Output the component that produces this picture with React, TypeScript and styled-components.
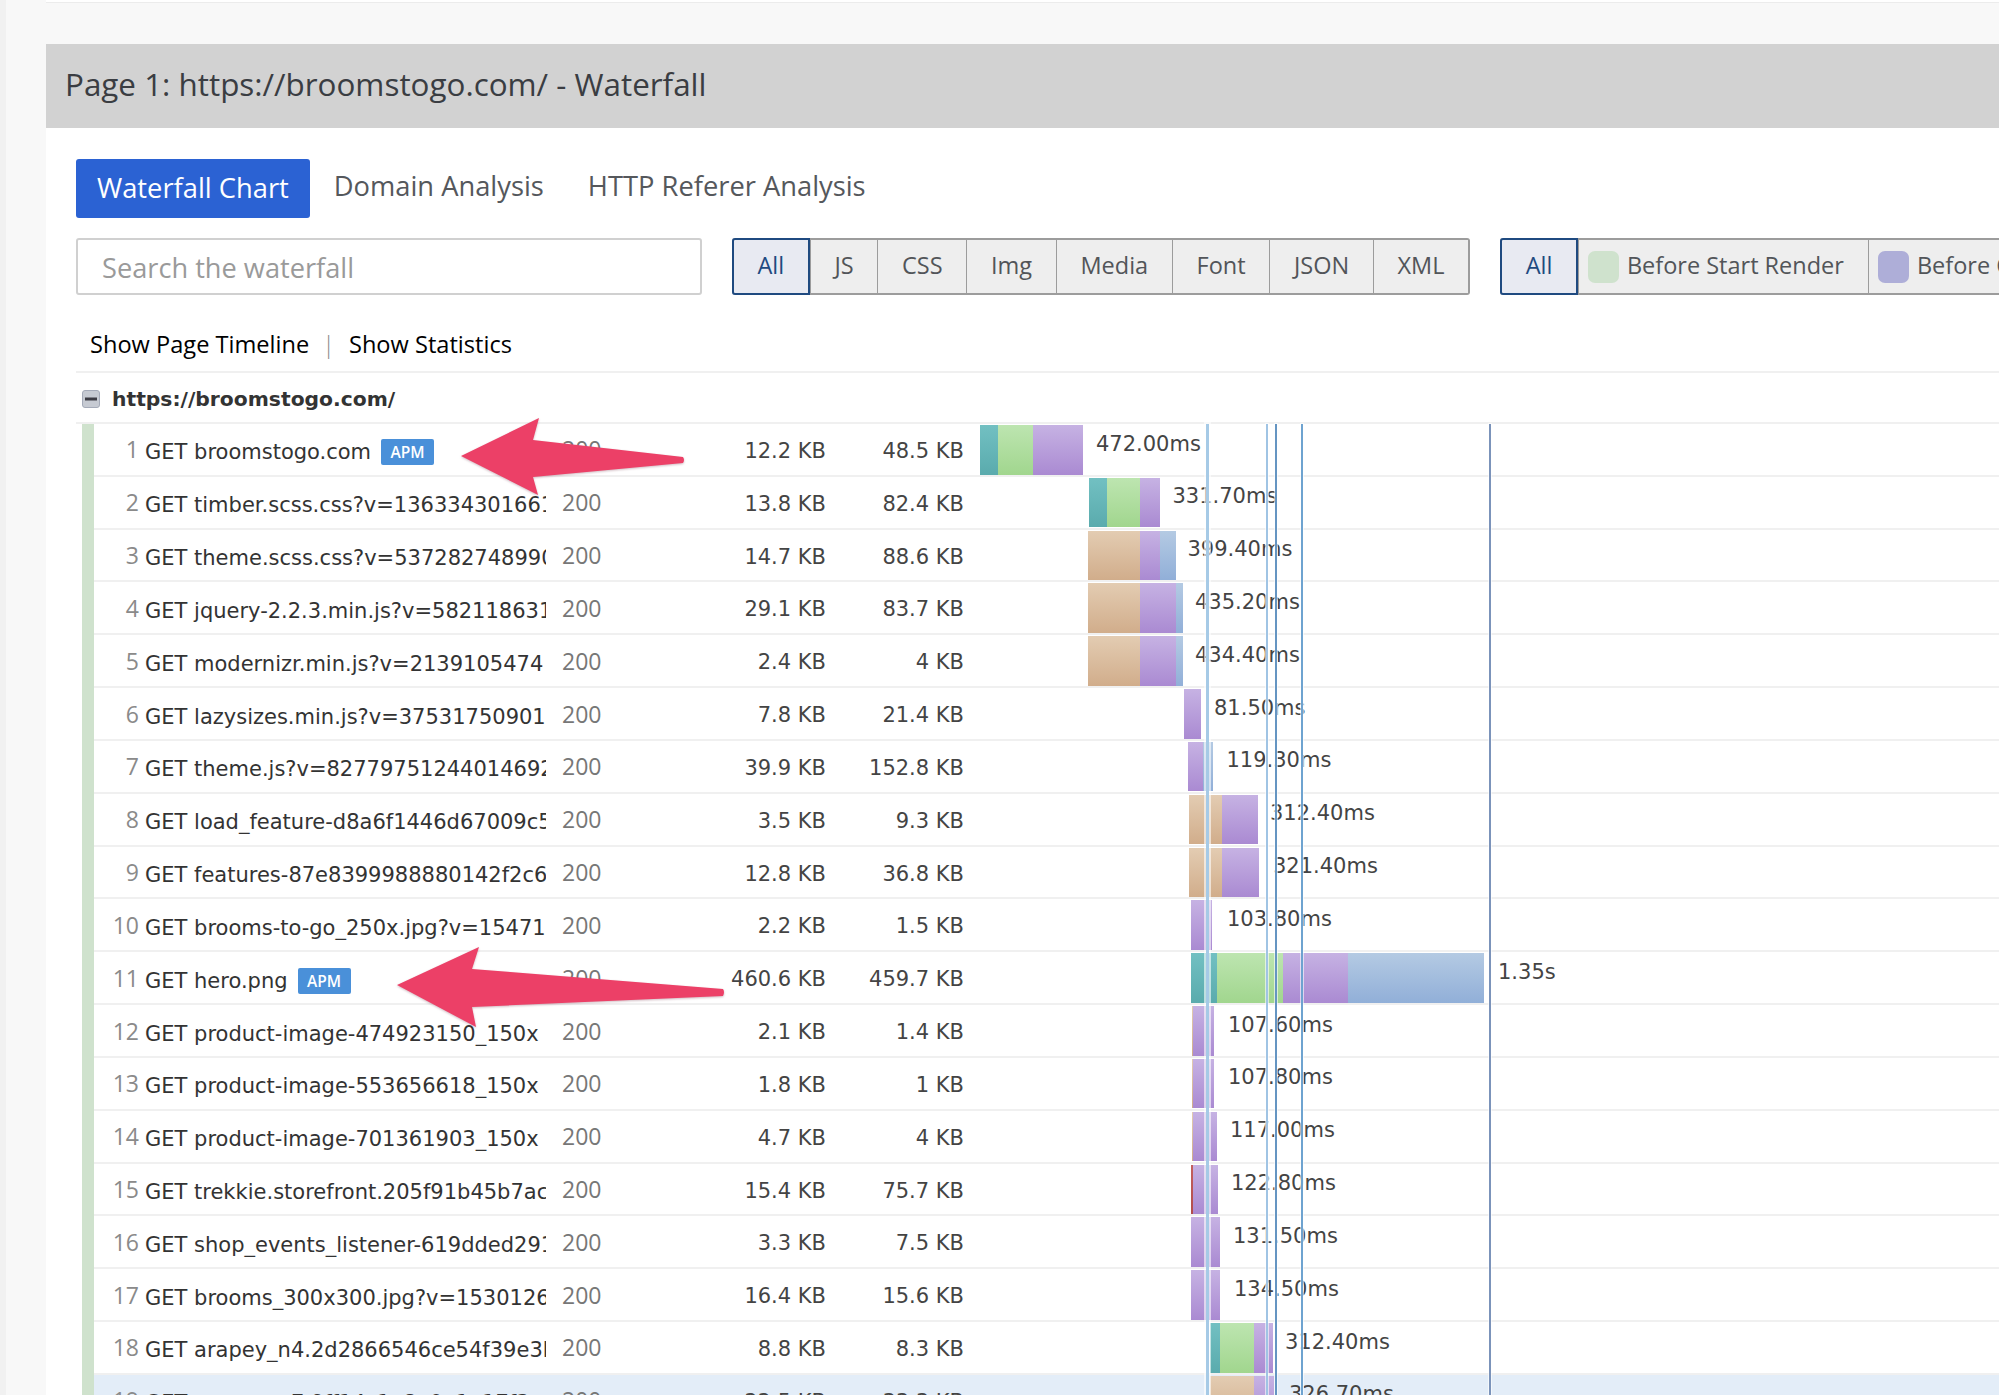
import styled, { createGlobalStyle } from 'styled-components';

const GlobalStyle = createGlobalStyle`
	html, body {
		margin: 0;
		height: 1395px;
		overflow: hidden;
		background: #f8f8f8;
		font-family: 'Open Sans', sans-serif;
	}
	* { box-sizing: border-box; }
`;

const Page = styled.div`
	width: 1999px;
	height: 1395px;
	overflow: hidden;
	border-left: 6px solid #f1f1f1;
	padding-left: 40px;
`;

const TopCard = styled.div`
	height: 3px;
	background: #fff;
	border-bottom: 1px solid #ececec;
`;

const Panel = styled.section`
	margin-top: 41px;
	background: #fff;
	height: 1351px;
	overflow: hidden;
`;

const PanelHeader = styled.h2`
	margin: 0;
	height: 84px;
	padding: 0 0 5px 19px;
	display: flex;
	align-items: center;
	background: #d2d2d2;
	color: #3a3d42;
	font-size: 31.4px;
	font-weight: 400;
`;

const Body = styled.div`
	padding: 31px 0 0 30px;
`;

const Tabs = styled.nav`
	display: flex;
	gap: 2px;
	height: 59px;
`;

const Tab = styled.a<{ $active?: boolean }>`
	display: flex;
	align-items: center;
	padding: ${(p) => (p.$active ? '0 21px 2px 21px' : '0 21px 6px 21px')};
	margin-right: ${(p) => (p.$active ? '1px' : '0')};
	border-radius: 3px;
	font-size: 27.3px;
	color: ${(p) => (p.$active ? '#fff' : '#55585c')};
	background: ${(p) => (p.$active ? '#2b62d3' : 'transparent')};
`;

const Toolbar = styled.div`
	display: flex;
	gap: 30px;
	margin-top: 20px;
	height: 57px;
`;

const Search = styled.input`
	flex: 0 0 626px;
	height: 57px;
	padding: 2px 24px 0;
	border: 2px solid #d0d0d0;
	border-radius: 3px;
	font-family: inherit;
	font-size: 27.2px;
	color: #444;
	outline: none;
	&::placeholder {
		color: #9a9a9a;
	}
`;

const FilterGroup = styled.div`
	display: flex;
	flex: none;
	border-top: 2px solid #9c9c9c;
	border-bottom: 2px solid #9c9c9c;
	border-right: 1px solid #9c9c9c;
	border-radius: 3px;
	background: #eee;
`;

const Filter = styled.button<{ $active?: boolean }>`
	display: flex;
	align-items: center;
	gap: 8px;
	margin: ${(p) => (p.$active ? '-2px 0' : '0')};
	padding: 0 ${(p) => (p.$active ? '25.5px' : '23.7px')} 3px;
	border: none;
	border-right: 1px solid #9c9c9c;
	border-radius: ${(p) => (p.$active ? '3px 0 0 3px' : '0')};
	background: ${(p) => (p.$active ? '#e8eaf2' : '#eee')};
	box-shadow: ${(p) => (p.$active ? 'inset 0 0 0 2px #1f4a80' : 'none')};
	color: ${(p) => (p.$active ? '#1f4a80' : '#525559')};
	font-family: inherit;
	font-size: 23.5px;
	white-space: nowrap;
`;

const LegendFilter = styled(Filter)`
	padding: 0 24px 3px 9px;
`;

const Swatch = styled.span<{ $color: string }>`
	width: 31px;
	height: 32px;
	margin-top: 3px;
	border-radius: 7px;
	background: ${(p) => p.$color};
`;

const Links = styled.div`
	display: flex;
	align-items: center;
	height: 78px;
	padding: 22px 0 0 14px;
	border-bottom: 2px solid #f0f0f0;
	font-size: 23.6px;
	font-weight: 500;
	color: #000;
`;

const Divider = styled.span`
	margin: 0 14px 0 13px;
	color: #888;
	font-weight: 300;
`;

const HostRow = styled.div`
	display: flex;
	align-items: center;
	gap: 12px;
	height: 51px;
	padding: 2px 0 0 6px;
	border-bottom: 2px solid #f0f0f0;
	font-family: 'DejaVu Sans', sans-serif;
	font-size: 20.3px;
	font-weight: 700;
	color: #333;
`;

const Rows = styled.div`
	position: relative;
	margin-left: 6px;
	border-left: 12px solid #cfe2cd;
`;

const Row = styled.div<{ $highlight?: boolean }>`
	display: grid;
	grid-template-columns: 43px 409px 94px 186px 138px 1fr;
	align-items: center;
	height: 52.83px;
	border-bottom: 2px solid #f0f0f0;
	background: ${(p) => (p.$highlight ? '#e3edf8' : 'transparent')};
	font-family: 'DejaVu Sans', sans-serif;
	font-size: 21px;
`;

const Index = styled.span`
	margin-right: -2px;
	text-align: right;
	font-family: 'Open Sans', sans-serif;
	font-size: 23px;
	color: #8a8a8a;
`;

const Url = styled.div`
	display: flex;
	align-items: center;
	gap: 10px;
	overflow: hidden;
	padding: 6px 0 0 8px;
	white-space: nowrap;
	color: #333;
`;

const Badge = styled.span`
	flex: none;
	width: 53px;
	height: 26px;
	border-radius: 2px;
	background: #4a90d9;
	color: #fff;
	font-family: 'Open Sans', sans-serif;
	font-size: 15.5px;
	font-weight: 600;
	line-height: 26px;
	text-align: center;
`;

const Status = styled.span`
	padding: 0 0 0 16px;
	font-family: 'Open Sans', sans-serif;
	font-size: 23px;
	color: #777;
`;

const Size = styled.span`
	padding-top: 3px;
	text-align: right;
	color: #444;
`;

const Lane = styled.div`
	display: flex;
	align-self: stretch;
	padding-top: 1px;
	height: 50.5px;
`;

const SEGMENTS = {
	teal: ['#72c0c2', '#5aabad'],
	green: ['#bde5b0', '#a1d68e'],
	purple: ['#c6b2e3', '#aa8ad2'],
	tan: ['#e3ccb2', '#d1ad8b'],
	blue: ['#b4cae3', '#91afd8'],
	red: ['#c4605f', '#b24c4c'],
};

type SegmentKind = keyof typeof SEGMENTS;

const Segment = styled.span<{ $kind: SegmentKind }>`
	flex: none;
	height: 100%;
	background: linear-gradient(${(p) => SEGMENTS[p.$kind][0]}, ${(p) => SEGMENTS[p.$kind][1]});
`;

const Duration = styled.span`
	flex: none;
	margin-top: 6.5px;
	line-height: 24px;
	color: #444;
`;

const Marker = styled.i<{ $width: number; $color: string }>`
	position: absolute;
	top: 0;
	bottom: 0;
	width: ${(p) => p.$width}px;
	background: ${(p) => p.$color};
	box-shadow: 0 0 0 ${(p) => (p.$width > 2 ? 2 : 1)}px rgba(255, 255, 255, 0.6);
`;

const ArrowSvg = styled.svg`
	position: absolute;
	overflow: visible;
	filter: drop-shadow(0 1px 1px rgba(120, 60, 80, 0.35));
`;

const CollapseIcon = () => (
	<svg width='18' height='18' viewBox='0 0 18 18'>
		<rect x='0.5' y='0.5' width='17' height='17' rx='2.5' fill='#c6cad2' stroke='#a4aab8' />
		<rect x='3' y='7.5' width='12' height='3' fill='#3c3c44' />
	</svg>
);

type Seg = [SegmentKind, number];

interface Req {
	url: string;
	apm?: boolean;
	size: string;
	total: string;
	start: number;
	segs: Seg[];
	time: string;
	timeX: number;
}

const REQUESTS: Req[] = [
	{ url: 'broomstogo.com', apm: true, size: '12.2 KB', total: '48.5 KB', start: 980, segs: [['teal', 17.5], ['green', 35], ['purple', 50.5]], time: '472.00ms', timeX: 1096 },
	{ url: 'timber.scss.css?v=1363343016613', size: '13.8 KB', total: '82.4 KB', start: 1088.6, segs: [['teal', 18.4], ['green', 33], ['purple', 20]], time: '331.70ms', timeX: 1172.5 },
	{ url: 'theme.scss.css?v=5372827489901', size: '14.7 KB', total: '88.6 KB', start: 1088, segs: [['tan', 52], ['purple', 20], ['blue', 16]], time: '399.40ms', timeX: 1187.5 },
	{ url: 'jquery-2.2.3.min.js?v=5821186312', size: '29.1 KB', total: '83.7 KB', start: 1088, segs: [['tan', 52], ['purple', 36], ['blue', 7]], time: '435.20ms', timeX: 1195 },
	{ url: 'modernizr.min.js?v=2139105474', size: '2.4 KB', total: '4 KB', start: 1088, segs: [['tan', 52], ['purple', 36], ['blue', 7]], time: '434.40ms', timeX: 1195 },
	{ url: 'lazysizes.min.js?v=37531750901', size: '7.8 KB', total: '21.4 KB', start: 1183.5, segs: [['purple', 17.5]], time: '81.50ms', timeX: 1214 },
	{ url: 'theme.js?v=827797512440146921', size: '39.9 KB', total: '152.8 KB', start: 1187.5, segs: [['purple', 15.5], ['blue', 9.5]], time: '119.30ms', timeX: 1226.5 },
	{ url: 'load_feature-d8a6f1446d67009c5', size: '3.5 KB', total: '9.3 KB', start: 1189, segs: [['tan', 33], ['purple', 36]], time: '312.40ms', timeX: 1270 },
	{ url: 'features-87e8399988880142f2c6', size: '12.8 KB', total: '36.8 KB', start: 1189, segs: [['tan', 33], ['purple', 37]], time: '321.40ms', timeX: 1273 },
	{ url: 'brooms-to-go_250x.jpg?v=15471', size: '2.2 KB', total: '1.5 KB', start: 1191, segs: [['purple', 21]], time: '103.80ms', timeX: 1227 },
	{ url: 'hero.png', apm: true, size: '460.6 KB', total: '459.7 KB', start: 1191, segs: [['teal', 26], ['green', 66], ['purple', 65], ['blue', 136]], time: '1.35s', timeX: 1498 },
	{ url: 'product-image-474923150_150x', size: '2.1 KB', total: '1.4 KB', start: 1192, segs: [['tan', 1], ['purple', 21]], time: '107.60ms', timeX: 1228 },
	{ url: 'product-image-553656618_150x', size: '1.8 KB', total: '1 KB', start: 1192, segs: [['tan', 1], ['purple', 21]], time: '107.80ms', timeX: 1228 },
	{ url: 'product-image-701361903_150x', size: '4.7 KB', total: '4 KB', start: 1192, segs: [['tan', 1], ['purple', 24]], time: '117.00ms', timeX: 1230 },
	{ url: 'trekkie.storefront.205f91b45b7ac', size: '15.4 KB', total: '75.7 KB', start: 1191, segs: [['red', 1.5], ['purple', 25.5]], time: '122.80ms', timeX: 1231 },
	{ url: 'shop_events_listener-619dded291', size: '3.3 KB', total: '7.5 KB', start: 1191, segs: [['purple', 29]], time: '131.50ms', timeX: 1233 },
	{ url: 'brooms_300x300.jpg?v=1530126', size: '16.4 KB', total: '15.6 KB', start: 1191, segs: [['purple', 29]], time: '134.50ms', timeX: 1234 },
	{ url: 'arapey_n4.2d2866546ce54f39e3b', size: '8.8 KB', total: '8.3 KB', start: 1210, segs: [['teal', 10], ['green', 34], ['purple', 19]], time: '312.40ms', timeX: 1285 },
	{ url: 'arapey_n7.9ff14c1e8a0a1e17f3', size: '22.5 KB', total: '33.3 KB', start: 1210, segs: [['tan', 44], ['purple', 20]], time: '326.70ms', timeX: 1289 },
];

const LANE_X = 964;
const ROWS_X = 94;

const MARKERS = [
	{ x: 1206, width: 3, color: '#a6cae6' },
	{ x: 1266, width: 2, color: '#a0c4e4' },
	{ x: 1275, width: 2, color: '#6595c2' },
	{ x: 1301, width: 2, color: '#6ea3d0' },
	{ x: 1489, width: 2, color: '#7b93ba' },
];

const TYPE_FILTERS = ['JS', 'CSS', 'Img', 'Media', 'Font', 'JSON', 'XML'];

export default function App() {
	return (
		<>
			<GlobalStyle />
			<Page>
				<TopCard />
				<Panel>
					<PanelHeader>Page 1: https://broomstogo.com/ - Waterfall</PanelHeader>
					<Body>
						<Tabs>
							<Tab $active>Waterfall Chart</Tab>
							<Tab>Domain Analysis</Tab>
							<Tab>HTTP Referer Analysis</Tab>
						</Tabs>
						<Toolbar>
							<Search placeholder='Search the waterfall' />
							<FilterGroup>
								<Filter $active>All</Filter>
								{TYPE_FILTERS.map((name) => (
									<Filter key={name}>{name}</Filter>
								))}
							</FilterGroup>
							<FilterGroup>
								<Filter $active>All</Filter>
								<LegendFilter>
									<Swatch $color='#cfe2cd' />
									Before Start Render
								</LegendFilter>
								<LegendFilter>
									<Swatch $color='#aeaed8' />
									Before Content Loaded
								</LegendFilter>
							</FilterGroup>
						</Toolbar>
						<Links>
							Show Page Timeline
							<Divider>|</Divider>
							Show Statistics
						</Links>
						<HostRow>
							<CollapseIcon />
							https://broomstogo.com/
						</HostRow>
						<Rows>
							{REQUESTS.map((req, i) => {
								const end = req.start + req.segs.reduce((sum, [, w]) => sum + w, 0);
								return (
									<Row key={req.url} $highlight={i === 18}>
										<Index>{i + 1}</Index>
										<Url>
											GET {req.url}
											{req.apm && <Badge>APM</Badge>}
										</Url>
										<Status>200</Status>
										<Size>{req.size}</Size>
										<Size>{req.total}</Size>
										<Lane style={{ paddingLeft: req.start - LANE_X }}>
											{req.segs.map(([kind, width], j) => (
												<Segment key={j} $kind={kind} style={{ width }} />
											))}
											<Duration style={{ marginLeft: req.timeX - end }}>{req.time}</Duration>
										</Lane>
									</Row>
								);
							})}
							{MARKERS.map((m) => (
								<Marker key={m.x} $width={m.width} $color={m.color} style={{ left: m.x - ROWS_X }} />
							))}
							<ArrowSvg width='224' height='77' viewBox='0 0 224 77' style={{ left: 461 - ROWS_X, top: -6 }}>
								<path d='M0 38 L78 0 L72 22 L222 39 Q224 42 222 45 L72 59 L77 77 Z' fill='#ec4067' />
							</ArrowSvg>
							<ArrowSvg width='328' height='80' viewBox='0 0 328 80' style={{ left: 397 - ROWS_X, top: 523 }}>
								<path d='M0 38 L82 0 L75 22 L326 42 Q328 45 326 49 L75 60 L79 80 Z' fill='#ec4067' />
							</ArrowSvg>
						</Rows>
					</Body>
				</Panel>
			</Page>
		</>
	);
}
